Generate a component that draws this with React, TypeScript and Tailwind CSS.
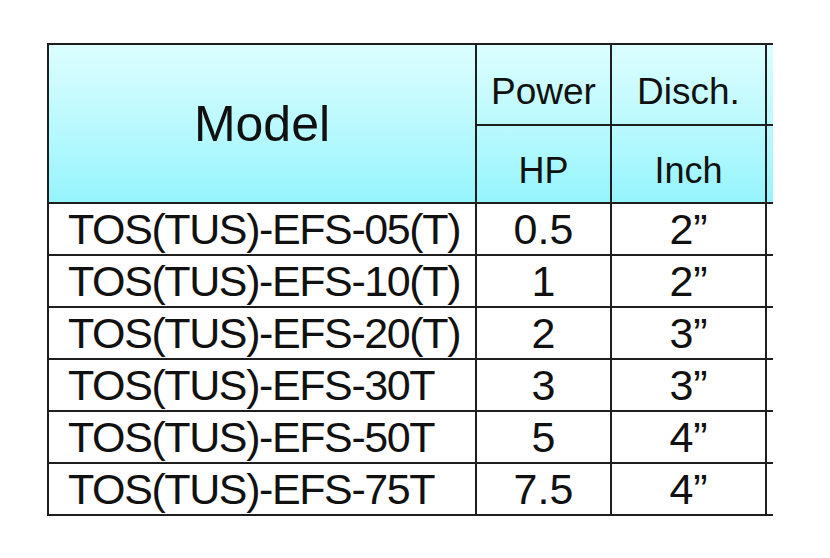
import React from 'react';

const rows = [
  { model: 'TOS(TUS)-EFS-05(T)', hp: '0.5', inch: '2”' },
  { model: 'TOS(TUS)-EFS-10(T)', hp: '1', inch: '2”' },
  { model: 'TOS(TUS)-EFS-20(T)', hp: '2', inch: '3”' },
  { model: 'TOS(TUS)-EFS-30T', hp: '3', inch: '3”' },
  { model: 'TOS(TUS)-EFS-50T', hp: '5', inch: '4”' },
  { model: 'TOS(TUS)-EFS-75T', hp: '7.5', inch: '4”' },
];

function App() {
  return (
    <div className="w-[830px] h-[558px] bg-white overflow-hidden font-['Liberation_Sans',Arial,sans-serif] text-[#111]">
      <div className="ml-[47px] mt-[43px] w-[726px] overflow-hidden border-l-2 border-t-2 border-[#1e1e1e]">
        {/* header */}
        <div className="grid grid-cols-[428px_135px_155px_6px] bg-linear-to-b from-[#dcfeff] to-[#94f4fc]">
          <div className="row-span-2 flex items-center justify-center border-r-2 border-b-2 border-[#1e1e1e] text-[50px] leading-none">
            Model
          </div>
          <div className="h-[81px] flex items-center justify-center pt-[13px] border-r-2 border-b-2 border-[#1e1e1e] text-[37px] leading-none">
            Power
          </div>
          <div className="h-[81px] flex items-center justify-center pt-[13px] border-r-2 border-b-2 border-[#1e1e1e] text-[37px] leading-none">
            Disch.
          </div>
          <div className="h-[81px] border-b-2 border-[#1e1e1e]" />
          <div className="h-[78px] flex items-center justify-center pt-[13px] border-r-2 border-b-2 border-[#1e1e1e] text-[36px] leading-none">
            HP
          </div>
          <div className="h-[78px] flex items-center justify-center pt-[13px] border-r-2 border-b-2 border-[#1e1e1e] text-[36px] leading-none">
            Inch
          </div>
          <div className="h-[78px] border-b-2 border-[#1e1e1e]" />
        </div>

        {rows.map((r) => (
          <div
            key={r.model}
            className="grid grid-cols-[428px_135px_155px_6px] h-[52px] text-[43px] leading-none whitespace-nowrap"
          >
            <div className="flex items-center pl-[19px] tracking-[-1.4px] border-r-2 border-b-2 border-[#1e1e1e]">
              {r.model}
            </div>
            <div className="flex items-center justify-center border-r-2 border-b-2 border-[#1e1e1e]">{r.hp}</div>
            <div className="flex items-center justify-center border-r-2 border-b-2 border-[#1e1e1e]">{r.inch}</div>
            <div className="border-b-2 border-[#1e1e1e]" />
          </div>
        ))}
      </div>
    </div>
  );
}

export default App;
